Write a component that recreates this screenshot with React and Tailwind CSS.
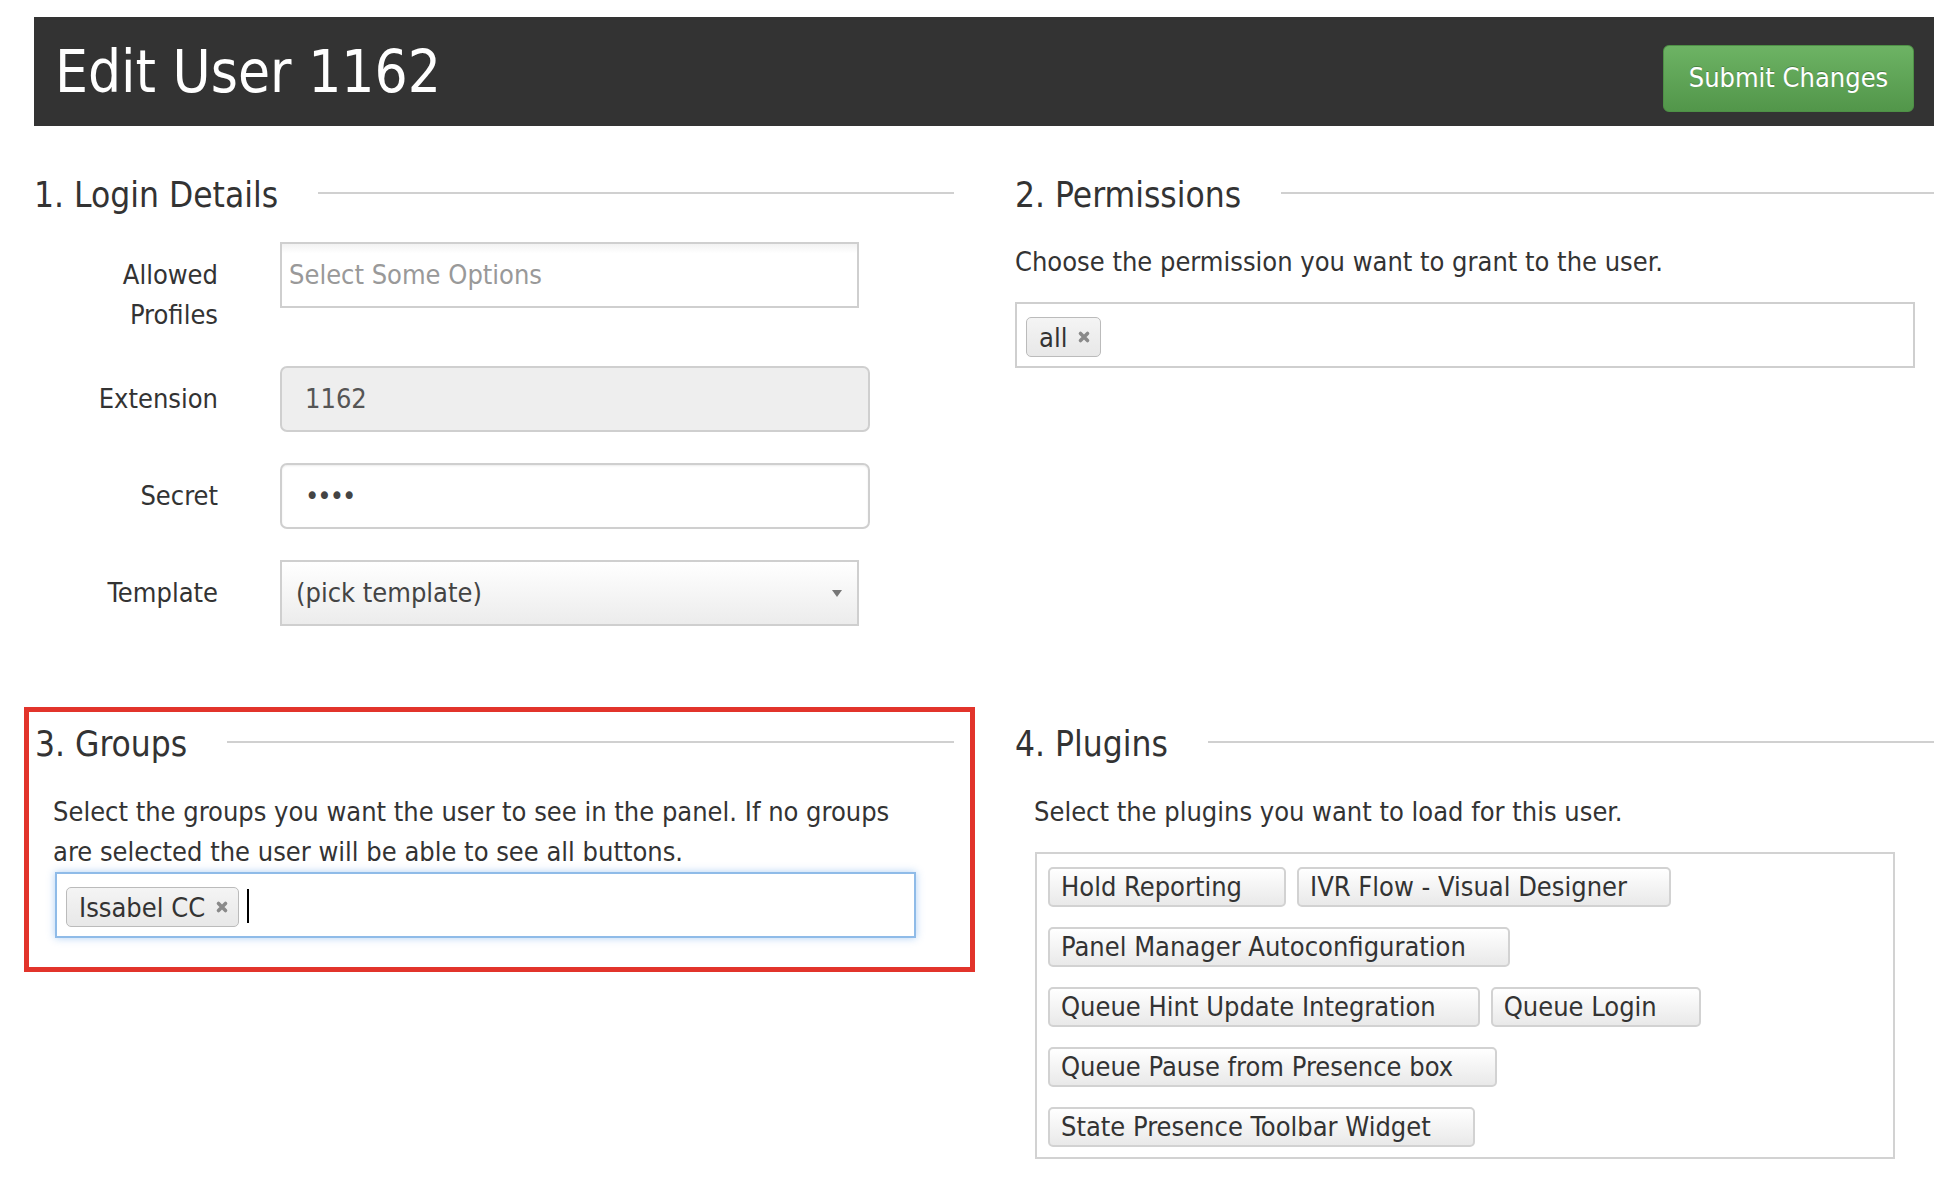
function CloseX() {
  return (
    <svg width="14" height="14" viewBox="0 0 14 14" className="shrink-0">
      <path d="M3.5 3.5 L10.5 10.5 M10.5 3.5 L3.5 10.5" stroke="#8a8a8a" strokeWidth="3.6" strokeLinecap="round" />
    </svg>
  )
}

function Chip({ label }) {
  return (
    <div className="flex items-center h-[40px] pl-[12px] pr-[9px] gap-[10px] rounded-[5px] border border-[#bbb] bg-linear-to-b from-[#f4f4f4] to-[#e8e8e8] text-[#333]">
      <span className="leading-none">{label}</span>
      <CloseX />
    </div>
  )
}

function SectionTitle({ children }) {
  return (
    <div className="flex items-center h-[50px]">
      <h2 className="text-[35px] leading-none text-[#333] whitespace-nowrap">{children}</h2>
      <div className="flex-1 h-[2px] bg-[#d0d0d0] ml-[40px] mb-[4px]" />
    </div>
  )
}

function FormRow({ label, children }) {
  return (
    <div className="flex items-start">
      <div className="w-[184px] text-right pt-[13px] leading-[40px] text-[#333]">{label}</div>
      <div className="ml-[62px]">{children}</div>
    </div>
  )
}

function PluginButton({ name }) {
  return (
    <div className="h-[40px] pl-[11px] pr-[42px] rounded-[5px] border-2 border-[#d2d2d2] bg-linear-to-b from-white to-[#e9e9e9] leading-[36px] text-[#333] whitespace-nowrap">
      {name}
    </div>
  )
}

const pluginRows = [
  ['Hold Reporting', 'IVR Flow - Visual Designer'],
  ['Panel Manager Autoconfiguration'],
  ['Queue Hint Update Integration', 'Queue Login'],
  ['Queue Pause from Presence box'],
  ['State Presence Toolbar Widget'],
]

export default function App() {
  return (
    <div className="min-h-screen bg-white text-[27px] text-[#333] font-['DejaVu_Sans_Condensed','DejaVu_Sans',sans-serif]">
      <div className="pl-[34px] pr-[12px] pt-[17px] pb-[30px]">
        {/* header */}
        <div className="flex items-center justify-between h-[109px] bg-[#333] pl-[21px] pr-[20px]">
          <h1 className="text-[58px] leading-none text-white">Edit User 1162</h1>
          <button className="mt-[14px] h-[67px] w-[251px] rounded-[6px] border border-[#4e9046] bg-linear-to-b from-[#6db364] to-[#52964a] text-white text-[27px] [text-shadow:0_-1px_0_rgba(0,0,0,0.25)]">
            Submit Changes
          </button>
        </div>

        <div className="grid grid-cols-[920px_919px] gap-x-[61px] items-start">
          {/* 1. Login details */}
          <section className="mt-[44px]">
            <SectionTitle>1. Login Details</SectionTitle>
            <div className="mt-[22px] flex flex-col gap-[31px]">
              <FormRow label={<>Allowed<br />Profiles</>}>
                <div className="w-[579px] h-[66px] border-2 border-[#cfcfcf] bg-linear-to-b from-[#f2f2f2] to-white to-[15%] flex items-center pl-[7px] text-[#999]">
                  Select Some Options
                </div>
              </FormRow>
              <FormRow label="Extension">
                <div className="w-[590px] h-[66px] border-2 border-[#cfcfcf] rounded-[7px] bg-[#eee] flex items-center pl-[23px] text-[#555]">
                  1162
                </div>
              </FormRow>
              <FormRow label="Secret">
                <div className="w-[590px] h-[66px] border-2 border-[#cfcfcf] rounded-[7px] bg-white shadow-[inset_0_1px_2px_rgba(0,0,0,0.08)] flex items-center pl-[23px] text-[#444] tracking-[-2px]">
                  ••••
                </div>
              </FormRow>
              <FormRow label="Template">
                <div className="w-[579px] h-[66px] border-2 border-[#cfcfcf] bg-linear-to-b from-white to-[#ececec] flex items-center justify-between pl-[14px] pr-[14px] text-[#444]">
                  <span>(pick template)</span>
                  <svg width="12" height="9" viewBox="0 0 12 9">
                    <path d="M1 1 L11 1 L6 8 Z" fill="#777" />
                  </svg>
                </div>
              </FormRow>
            </div>
          </section>

          {/* 2. Permissions */}
          <section className="mt-[44px]">
            <SectionTitle>2. Permissions</SectionTitle>
            <p className="mt-[22px] leading-[40px]">Choose the permission you want to grant to the user.</p>
            <div className="mt-[20px] w-[900px] h-[66px] border-2 border-[#cfcfcf] bg-white flex items-start pt-[13px] pl-[9px]">
              <Chip label="all" />
            </div>
          </section>

          {/* 3. Groups (highlighted) */}
          <section className="mt-[81px] -ml-[10px] w-[951px] border-[5px] border-[#e2342b] pl-[6px] pr-[16px] pt-[7px] pb-[29px]">
            <SectionTitle>3. Groups</SectionTitle>
            <p className="mt-[23px] pl-[18px] leading-[40px]">
              Select the groups you want the user to see in the panel. If no groups
              <br />
              are selected the user will be able to see all buttons.
            </p>
            <div className="ml-[20px] w-[861px] h-[66px] border-2 border-[#8fbbe8] bg-white shadow-[0_0_8px_rgba(82,150,230,0.45)] flex items-start pt-[13px] pl-[9px]">
              <Chip label="Issabel CC" />
              <div className="ml-[8px] mt-[2px] w-[2px] h-[34px] bg-black" />
            </div>
          </section>

          {/* 4. Plugins */}
          <section className="mt-[93px]">
            <SectionTitle>4. Plugins</SectionTitle>
            <p className="mt-[23px] pl-[19px] leading-[40px]">Select the plugins you want to load for this user.</p>
            <div className="mt-[20px] ml-[20px] w-[860px] border-2 border-[#d2d2d2] bg-white pt-[13px] pb-[10px] pl-[11px] flex flex-col gap-[20px]">
              {pluginRows.map((row, i) => (
                <div key={i} className="flex gap-[11px]">
                  {row.map((name) => (
                    <PluginButton key={name} name={name} />
                  ))}
                </div>
              ))}
            </div>
          </section>
        </div>
      </div>
    </div>
  )
}
